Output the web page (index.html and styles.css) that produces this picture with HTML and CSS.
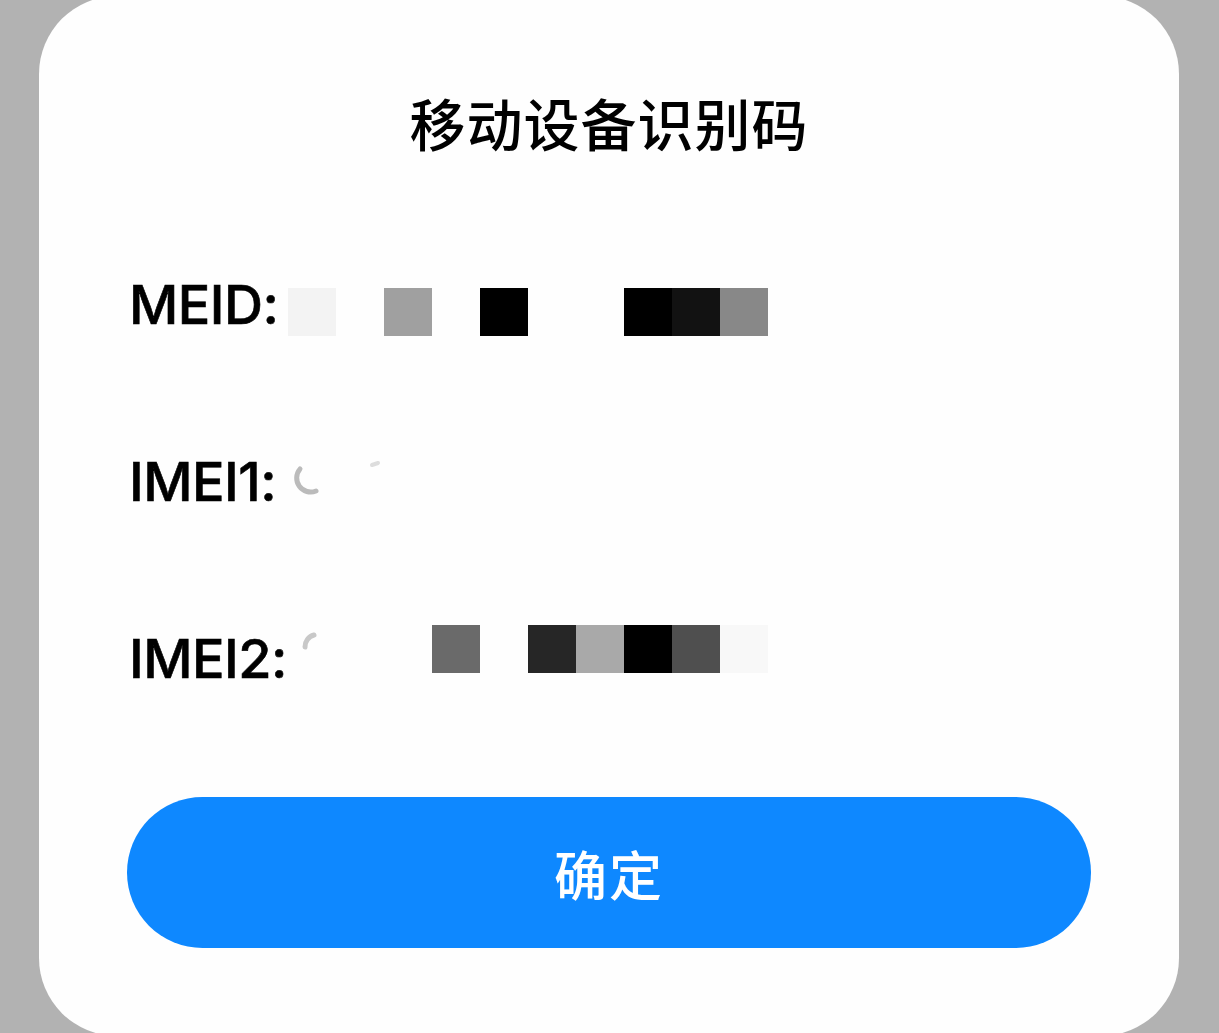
FILE: index.html
```html
<!DOCTYPE html>
<html lang="zh-CN">
<head>
    <meta charset="UTF-8">
    <meta name="viewport" content="width=device-width, initial-scale=1.0">
    <title>移动设备识别码</title>
    <link rel="stylesheet" href="styles.css">
</head>
<body>
    <div class="dialog">
        <h1 class="dialog-title">移动设备识别码</h1>

        <div class="id-list">
            <div class="id-row">
                <span class="id-label">MEID:</span>
                <div class="mosaic">
                    <span class="cell c-f3"></span>
                    <span class="cell"></span>
                    <span class="cell c-a0"></span>
                    <span class="cell"></span>
                    <span class="cell c-00"></span>
                    <span class="cell"></span>
                    <span class="cell"></span>
                    <span class="cell c-00"></span>
                    <span class="cell c-11"></span>
                    <span class="cell c-88"></span>
                </div>
            </div>

            <div class="id-row">
                <span class="id-label">IMEI1:</span>
                <div class="mosaic">
                    <span class="cell ghost">
                        <svg width="48" height="48" viewBox="0 0 48 48">
                            <path d="M12 14 A14 14 0 0 0 28 36" fill="none" stroke="#bbb" stroke-width="5" stroke-linecap="round"/>
                        </svg>
                    </span>
                    <span class="cell ghost">
                        <svg width="48" height="48" viewBox="0 0 48 48">
                            <path d="M36 10 L42 8" fill="none" stroke="#ddd" stroke-width="4" stroke-linecap="round"/>
                        </svg>
                    </span>
                </div>
            </div>

            <div class="id-row">
                <span class="id-label">IMEI2:</span>
                <div class="mosaic">
                    <span class="cell ghost">
                        <svg width="48" height="48" viewBox="0 0 48 48">
                            <path d="M26 10 A12 12 0 0 0 17 22" fill="none" stroke="#c8c8c8" stroke-width="5" stroke-linecap="round"/>
                        </svg>
                    </span>
                    <span class="cell"></span>
                    <span class="cell"></span>
                    <span class="cell c-6a"></span>
                    <span class="cell"></span>
                    <span class="cell c-26"></span>
                    <span class="cell c-a9"></span>
                    <span class="cell c-00"></span>
                    <span class="cell c-4f"></span>
                    <span class="cell c-f7"></span>
                </div>
            </div>
        </div>

        <button class="confirm-btn">确定</button>
    </div>
</body>
</html>
```

FILE: styles.css
```css
body {
    margin: 0;
    height: 1033px;
    overflow: hidden;
    background: #b2b2b2;
    font-family: Inter, "Noto Sans CJK SC", sans-serif;
    color: #000;
}

.dialog {
    box-sizing: border-box;
    width: 1140px;
    height: 1040px;
    margin: -4px 0 0 39px;
    padding-top: 86px;
    background: #fefefe;
    border-radius: 78px;
}

.dialog-title {
    margin: 0;
    text-align: center;
    font-family: "Noto Sans CJK SC", sans-serif;
    font-size: 56px;
    font-weight: 500;
    line-height: 80px;
    letter-spacing: 1px;
}

.id-list {
    display: flex;
    flex-direction: column;
    gap: 97px;
    margin-top: 100px;
    padding-left: 90px;
}

.id-row {
    display: flex;
    align-items: center;
    height: 80px;
}

.id-label {
    width: 159px;
    padding-top: 6px;
    font-size: 54px;
    font-weight: 500;
    line-height: 80px;
    letter-spacing: -0.5px;
    -webkit-text-stroke: 0.6px #000;
}

.mosaic {
    display: flex;
}

.id-row:first-child .mosaic {
    margin-top: 20px;
}

.id-row:last-child .mosaic {
    margin-top: -14px;
}

.cell {
    display: block;
    width: 48px;
    height: 48px;
}

.c-00 { background: #000; }
.c-11 { background: #121212; }
.c-26 { background: #262626; }
.c-4f { background: #4f4f4f; }
.c-6a { background: #6a6a6a; }
.c-88 { background: #888; }
.c-a0 { background: #a0a0a0; }
.c-a9 { background: #a9a9a9; }
.c-f3 { background: #f3f3f3; }
.c-f7 { background: #f8f8f8; }

.confirm-btn {
    display: block;
    width: 964px;
    height: 151px;
    margin: 101px 0 0 88px;
    border: none;
    border-radius: 76px;
    background: #0e88ff;
    color: #fff;
    font-family: "Noto Sans CJK SC", sans-serif;
    font-size: 53px;
    font-weight: 500;
    letter-spacing: 2px;
}
```
